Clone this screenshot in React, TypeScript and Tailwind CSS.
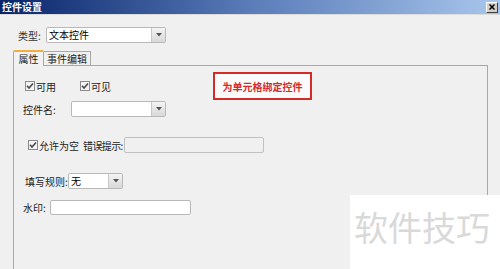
import React from "react";

const font = { fontFamily: '"Noto Sans CJK SC", "Noto Sans", sans-serif' };

function Check() {
  return (
    <svg width="10" height="10" viewBox="0 0 10 10" className="shrink-0">
      <rect x="0.5" y="0.5" width="9" height="9" fill="#f4f4f4" stroke="#8c8c8c" />
      <path d="M2 4.8 L4 7 L8 2.5" fill="none" stroke="#4a4a4a" strokeWidth="1.6" />
    </svg>
  );
}

function Arrow() {
  return (
    <div className="h-full w-[14px] shrink-0 border-l border-[#c8c8c8] bg-gradient-to-b from-[#f4f4f4] to-[#d8d8d8] flex items-center justify-center">
      <svg width="6" height="4" viewBox="0 0 6 4">
        <path d="M0 0 L6 0 L3 3.5 Z" fill="#555" />
      </svg>
    </div>
  );
}

function Select({ w, value }: { w: string; value?: string }) {
  return (
    <div className={`${w} h-[16px] bg-white border border-[#b8b8b8] rounded-[2px] flex items-stretch overflow-hidden`}>
      <div className="flex-1 text-[10px] leading-[14px] pl-[2px] text-black">{value}</div>
      <Arrow />
    </div>
  );
}

export default function App() {
  return (
    <div style={font} className="w-[500px] h-[269px] bg-[#f0f0f0] relative overflow-hidden text-[#222]">
      {/* Title bar */}
      <div className="h-[15px] bg-gradient-to-r from-[#0a246a] via-[#5a7cb8] to-[#a9c6ec] flex items-center justify-between border-b border-[#dcdcdc]">
        <span className="text-white font-bold text-[10px] leading-[14px] pl-[2px]">控件设置</span>
        <div className="w-[12px] h-[11px] mr-[2px] bg-[#d4d0c8] border border-t-white border-l-white border-r-[#404040] border-b-[#404040] flex items-center justify-center">
          <svg width="6" height="6" viewBox="0 0 6 6">
            <path d="M0.5 0.5 L5.5 5.5 M5.5 0.5 L0.5 5.5" stroke="#000" strokeWidth="1.5" />
          </svg>
        </div>
      </div>

      {/* Type row */}
      <div className="mt-[12px] flex items-center pl-[18px] h-[16px]">
        <span className="text-[10px] w-[28px] text-[#333]">类型:</span>
        <Select w="w-[120px]" value="文本控件" />
      </div>

      {/* Tabs */}
      <div className="mt-[6px] ml-[13px] flex items-end h-[16px]">
        <div className="w-[31px] h-[16px] bg-[#f2f2f2] border border-b-0 border-[#a8a8a8] border-t-2 border-t-[#f0b040] rounded-t-[2px] text-[10px] leading-[13px] text-center relative z-10 -mb-px">
          属性
        </div>
        <div className="w-[47px] h-[14px] bg-[#f0f0f0] border border-b-0 border-l-0 border-[#a8a8a8] text-[10px] leading-[13px] text-center">
          事件编辑
        </div>
      </div>

      {/* Panel */}
      <div className="ml-[13px] w-[475px] h-[210px] border-t border-l border-r border-[#a8a8a8] relative">
        <div className="absolute left-[199px] top-[6px] w-[99px] h-[28px] border-2 border-[#d42a2a] bg-[#fafafa] flex items-center justify-center">
          <span className="text-[10px] font-bold text-[#d42a2a]">为单元格绑定控件</span>
        </div>

        <div className="flex flex-col">
          <div className="mt-[14px] pl-[11px] flex items-center h-[12px] text-[10px]">
            <Check />
            <span className="ml-[1px] w-[44px]">可用</span>
            <Check />
            <span className="ml-[1px]">可见</span>
          </div>

          <div className="mt-[9px] pl-[9px] flex items-center h-[16px] text-[10px]">
            <span className="w-[48px]">控件名:</span>
            <Select w="w-[95px]" />
          </div>

          <div className="mt-[20px] pl-[14px] flex items-center h-[16px] text-[10px]">
            <Check />
            <span className="ml-[1px] w-[44px] whitespace-nowrap">允许为空</span>
            <span className="whitespace-nowrap shrink-0 tracking-[-0.6px]">错误提示:</span>
            <div className="ml-[1px] w-[140px] h-[16px] border border-[#c0c0c0] bg-[#f0f0f0] rounded-[2px]" />
          </div>

          <div className="mt-[20px] pl-[11px] flex items-center h-[16px] text-[10px]">
            <span className="w-[43px] whitespace-nowrap">填写规则:</span>
            <Select w="w-[55px]" value="无" />
          </div>

          <div className="mt-[10px] pl-[9px] flex items-center h-[16px] text-[10px]">
            <span className="w-[27px]">水印:</span>
            <div className="w-[141px] h-[15px] border border-[#b8b8b8] bg-white rounded-[2px]" />
          </div>
        </div>
      </div>

      {/* Watermark overlay */}
      <div className="absolute left-[350px] top-[195px] w-[150px] h-[74px] bg-white flex items-start pt-[12px] pl-[4px]">
        <span className="text-[34px] leading-[40px] text-[#d9d9d9]">软件技巧</span>
      </div>
    </div>
  );
}
